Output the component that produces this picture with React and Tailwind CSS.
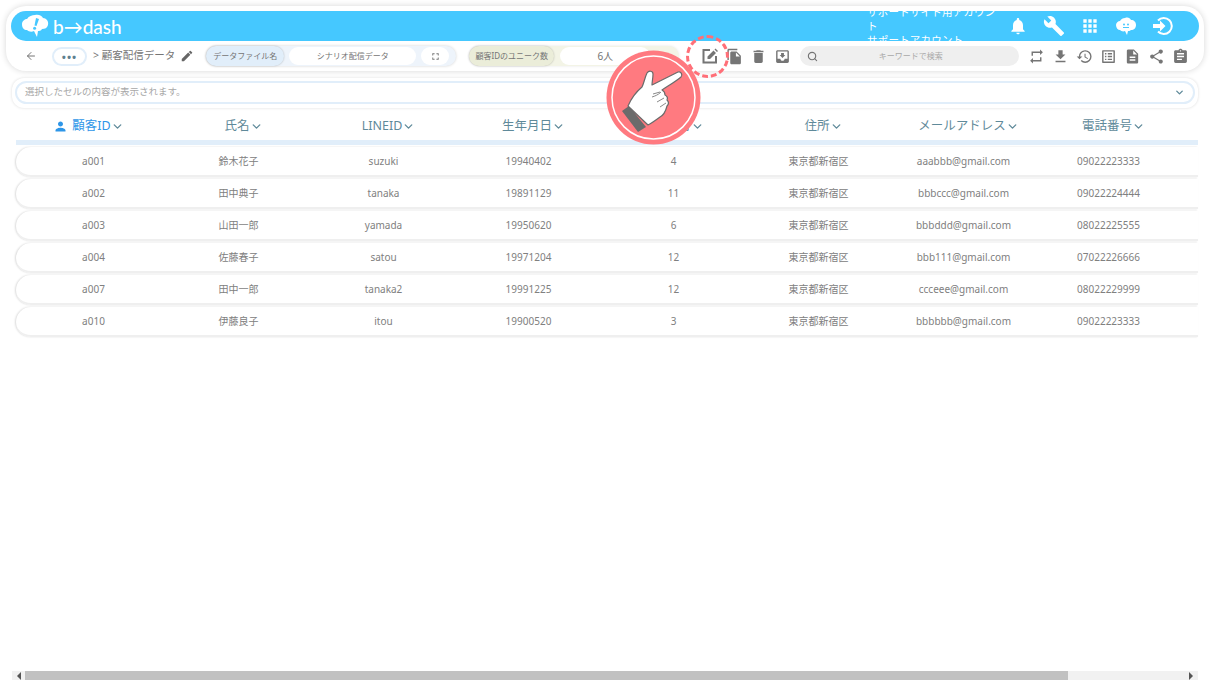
import React from "react";
import { ChevronDown, ArrowLeft, Search } from "lucide-react";
import {
  MdNotifications, MdBuild, MdApps, MdEdit, MdDelete, MdMoveToInbox, MdRepeat, MdFileDownload, MdHistory,
  MdListAlt, MdDescription, MdShare, MdAssignment, MdPerson, MdOutlineEditNote, MdFileCopy, MdOutlineFullscreen,
} from "react-icons/md";

const font = "font-['Noto_Sans','Noto_Sans_CJK_JP',sans-serif]";

const rows = [
  ["a001", "鈴木花子", "suzuki", "19940402", "4", "東京都新宿区", "aaabbb@gmail.com", "09022223333"],
  ["a002", "田中典子", "tanaka", "19891129", "11", "東京都新宿区", "bbbccc@gmail.com", "09022224444"],
  ["a003", "山田一郎", "yamada", "19950620", "6", "東京都新宿区", "bbbddd@gmail.com", "08022225555"],
  ["a004", "佐藤春子", "satou", "19971204", "12", "東京都新宿区", "bbb111@gmail.com", "07022226666"],
  ["a007", "田中一郎", "tanaka2", "19991225", "12", "東京都新宿区", "ccceee@gmail.com", "08022229999"],
  ["a010", "伊藤良子", "itou", "19900520", "3", "東京都新宿区", "bbbbbb@gmail.com", "09022223333"],
];

const headers = ["氏名", "LINEID", "生年月日", "誕生月", "住所", "メールアドレス", "電話番号"];

const Logo = () => (
  <svg width="28" height="24" viewBox="0 0 28 24">
    <path d="M13 1c4-1 7 1 8 3 3 0 6 3 5 7-1 3-3 4-6 4-1 2-3 2-4 2l-1 6-3-6c-2 1-5 1-7-1-3 0-5-2-5-6 0-3 3-5 5-5 2-3 5-4 8-4z" fill="#fff" />
    <path d="M14 4l3 1-2.5 7-2-.6z" fill="#45c8ff" />
    <circle cx="12.6" cy="14.2" r="1.5" fill="#45c8ff" />
  </svg>
);

const CloudFace = () => (
  <svg width="20" height="19" viewBox="0 0 20 19">
    <path d="M9 1c3-1 5 0 6 2 3 0 5 2 5 5 0 3-2 5-5 5-1 1-2 1-3 1l-1 4-2-4c-2 1-4 0-5-1-2 0-4-2-4-5 0-2 2-4 4-4 1-2 3-3 5-3z" fill="#fff" />
    <circle cx="8" cy="7.5" r="1" fill="#45c8ff" />
    <circle cx="12" cy="7.5" r="1" fill="#45c8ff" />
    <path d="M7 10.500h6" stroke="#45c8ff" strokeWidth="1" />
  </svg>
);

const LoginIcon = () => (
  <svg width="21" height="20" viewBox="0 0 21 20" fill="none" stroke="#fff" strokeWidth="2">
    <path d="M6 4.500a8 8 0 1 1 0 11" />
    <path d="M1 8h7V4.500l5.500 5.500L8 15.500V12H1z" fill="#fff" stroke="none" />
  </svg>
);

const HandBadge = () => (
  <svg className="absolute left-[606px] top-[50px]" width="95" height="95" viewBox="0 0 95 95">
    <circle cx="47.500" cy="47.500" r="47" fill="#ff7a80" />
    <circle cx="47.500" cy="47.500" r="41.500" fill="none" stroke="#fff" strokeWidth="1.500" />
    <path d="M16 61l7-5 17 21-8 5z" fill="#6b6b6b" />
    <path
      d="M22 56c3-7 8-14 14-19 2-4 3-10 5-14 2-3 6-2 6 1 0 4-1 8-1 11l26-13c3-1 5 3 3 5-6 5-13 9-19 13 2 1 3 3 3 5 2 1 3 3 2 5 2 2 2 4 0 6-1 4-3 9-7 11-4 3-8 6-12 8z"
      fill="#fff"
      stroke="#6b6b6b"
      strokeWidth="1.200"
      strokeLinejoin="round"
    />
    <path d="M47 44l7-2M55 42c-3 3-6 4-9 5M58 48l-7 4M60 53l-6 4" fill="none" stroke="#8a8a8a" strokeWidth="1" />
  </svg>
);

const toolIcon = "text-[#757575] shrink-0";

export default function App() {
  return (
    <div className={`relative h-[680px] w-[1210px] overflow-hidden bg-white ${font}`}>
      <div className="px-[6px] pt-[6px]">
        {/* Header */}
        <div className="h-[65px] rounded-[20px] bg-white p-[5px] pb-0 shadow-[0_0_6px_rgba(0,0,0,0.16)]">
          <div className="flex h-[30px] items-center rounded-full bg-[#45c8ff] pl-[11px] text-white">
            <Logo />
            <span className="ml-[3px] w-[814px] text-[19px] font-medium leading-none font-['Lato',sans-serif]">b→dash</span>
            <div className="w-[138px] text-[10.5px] leading-[14px] tracking-[0.2px]">
              <p>サポートサイト用アカウント</p>
              <p>サポートアカウント</p>
            </div>
            <MdNotifications size={20} className="ml-[3px]" />
            <MdBuild size={22} className="ml-[15px]" />
            <MdApps size={20} className="ml-[15px]" />
            <span className="ml-[16px]"><CloudFace /></span>
            <span className="ml-[16px]"><LoginIcon /></span>
          </div>

          {/* Toolbar */}
          <div className="flex h-[30px] items-center">
            <ArrowLeft size={12} strokeWidth={2} className="ml-[14px] text-[#757575]" />
            <div className="ml-[15px] flex h-[19px] w-[35px] items-center justify-center rounded-full border-2 border-[#e1eefa] text-[#5f7f8f] text-[11px] font-bold leading-none tracking-[1px]">•••</div>
            <span className="ml-[6px] text-[10.5px] text-[#757575] whitespace-nowrap">&gt; 顧客配信データ</span>
            <MdEdit size={14} className="ml-[5px] text-[#666]" />

            <div className="ml-[12px] flex h-[20px] w-[250px] items-center rounded-full bg-[#eef4fb] shadow-[0_0_3px_rgba(0,0,0,0.18)]">
              <div className="flex h-[20px] w-[78px] items-center justify-center rounded-full bg-[#e1eefa] text-[8px] text-[#757575] shadow-[0_0_2px_rgba(0,0,0,0.25)]">データファイル名</div>
              <div className="ml-[5px] flex h-[18px] w-[127px] items-center justify-center rounded-full bg-white text-[8px] text-[#757575]">シナリオ配信データ</div>
              <div className="ml-[5px] flex h-[18px] w-[28px] items-center justify-center rounded-full bg-white text-[#757575]">
                <MdOutlineFullscreen size={11} />
              </div>
            </div>

            <div className="ml-[13px] flex h-[20px] w-[210px] items-center rounded-full bg-[#f3f4e6] shadow-[0_0_3px_rgba(0,0,0,0.1)]">
              <div className="flex h-[20px] w-[85px] items-center justify-center rounded-full bg-[#ebedd9] text-[8px] text-[#757575] shadow-[0_0_2px_rgba(0,0,0,0.25)]">顧客IDのユニーク数</div>
              <div className="ml-[6px] flex h-[18px] w-[90px] items-center justify-center rounded-full bg-white text-[10px] text-[#757575]">6人</div>
            </div>

            <MdOutlineEditNote size={0} className="hidden" />
            <svg width="18" height="18" viewBox="0 0 18 18" className="ml-[22px] shrink-0" fill="none">
              <path d="M9 3H2.500v12.500H15V9" stroke="#757575" strokeWidth="2" />
              <path d="M6.500 9.500v2.500H9l6-6-2.500-2.500zM13.500 2.500l1-1 2.500 2.500-1 1z" fill="#757575" />
            </svg>
            <MdFileCopy size={17} className={`${toolIcon} ml-[7px]`} />
            <MdDelete size={17} className={`${toolIcon} ml-[7px]`} />
            <MdMoveToInbox size={17} className={`${toolIcon} ml-[7px]`} />

            <div className="ml-[9px] flex h-[20px] w-[219px] items-center rounded-full bg-[#efefef] pl-[7px] text-[8px] text-[#a8a8a8]">
              <Search size={11} strokeWidth={2.500} className="text-[#757575]" />
              <span className="flex-1 pr-[16px] text-center">キーワードで検索</span>
            </div>

            <MdRepeat size={17} className={`${toolIcon} ml-[9px]`} />
            <MdFileDownload size={17} className={`${toolIcon} ml-[7px]`} />
            <MdHistory size={17} className={`${toolIcon} ml-[7px]`} />
            <MdListAlt size={17} className={`${toolIcon} ml-[7px]`} />
            <MdDescription size={17} className={`${toolIcon} ml-[7px]`} />
            <MdShare size={17} className={`${toolIcon} ml-[7px]`} />
            <MdAssignment size={17} className={`${toolIcon} ml-[7px]`} />
          </div>
        </div>

        {/* Selected cell bar */}
        <div className="mx-[6px] mt-[7px] h-[30px] rounded-[12px] bg-white p-[3px] shadow-[0_0_3px_rgba(0,0,0,0.14)]">
          <div className="flex h-[23px] items-center justify-between rounded-full border-2 border-[#e1eefa] pl-[8px] pr-[8px] text-[9.500px] text-[#a8a8a8]">
            <span>選択したセルの内容が表示されます。</span>
            <ChevronDown size={11} strokeWidth={3} className="text-[#5f8a9a]" />
          </div>
        </div>
      </div>

      {/* Table */}
      <div className="ml-[16px] mt-[5px] w-[1182px]">
        <div className="flex h-[27px] items-center pl-[5px] text-[12.500px] text-[#5f8a9a]">
          <div className="flex w-[145px] items-center justify-center pr-[10px] text-[#2e96e8]">
            <MdPerson size={15} className="mr-[4px] text-[#2e96e8]" />
            顧客ID
            <ChevronDown size={13} strokeWidth={2.500} className="text-[#5f8a9a]" />
          </div>
          {headers.map((h) => (
            <div key={h} className="flex w-[145px] items-center justify-center pl-[10px]">
              {h}
              <ChevronDown size={13} strokeWidth={2.500} />
            </div>
          ))}
        </div>
        <div className="h-[5px] bg-[#e1eefa]" />
        <div className="mt-[2px]">
          {rows.map((r) => (
            <div key={r[0]} className="mb-[2px] flex h-[28px] items-center rounded-l-full border-b-2 border-[#efefef] pl-[5px] text-[10px] text-[#808080] shadow-[-1px_0_2px_rgba(0,0,0,0.14)] box-content">
              {r.map((c, i) => (
                <div key={i} className="w-[145px] text-center">{c}</div>
              ))}
            </div>
          ))}
        </div>
      </div>

      {/* Horizontal scrollbar */}
      <div className="absolute bottom-0 left-[12px] flex h-[9px] w-[1186px] items-center bg-[#f1f1f1]">
        <div className="ml-[5px] h-0 w-0 border-y-[4px] border-r-[4px] border-y-transparent border-r-[#555]" />
        <div className="ml-[4px] h-full w-[1043px] bg-[#c1c1c1]" />
        <div className="ml-auto mr-[5px] h-0 w-0 border-y-[4px] border-l-[4px] border-y-transparent border-l-[#555]" />
      </div>

      {/* Tutorial overlay */}
      <div className="absolute left-[686px] top-[35px] h-[43px] w-[43px] rounded-full border-[3px] border-dashed border-[#ff6f78]" />
      <HandBadge />
    </div>
  );
}
